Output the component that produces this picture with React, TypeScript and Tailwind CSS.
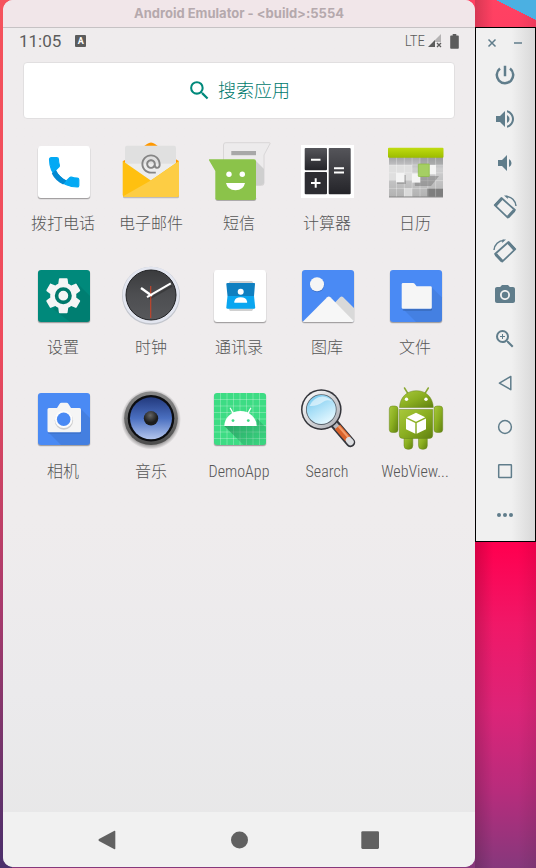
import type { ReactNode } from "react";
import {
  MdAlternateEmail,
  MdCameraAlt,
  MdSearch,
  MdSettings,
  MdVolumeDown,
  MdVolumeUp,
  MdZoomIn,
} from "react-icons/md";

/* ---------- launcher icons, all on a 72 x 72 grid ---------- */

function Icon({ children }: { children: ReactNode }) {
  return (
    <svg viewBox="0 0 72 72" className="size-18" aria-hidden="true">
      {children}
    </svg>
  );
}

function Tile({ fill, y = 10 }: { fill: string; y?: number }) {
  return (
    <>
      <rect x="10.500" y={y + 1} width="53" height="52.4" rx="3" fill="#000" opacity=".12" />
      <rect x="11" y={y + 0.8} width="52" height="52.2" rx="3" fill="#000" opacity=".22" />
      <rect x="11" y={y} width="52" height="52" rx="3" fill={fill} />
    </>
  );
}

function PhoneIcon() {
  return (
    <Icon>
      <Tile fill="#fff" />
      <path
        transform="translate(17.6 16.8) scale(1.63)"
        fill="#03a9f4"
        stroke="#03a9f4"
        strokeWidth=".7"
        d="M6.62 10.79c1.44 2.83 3.76 5.14 6.59 6.59l2.2-2.2c.27-.27.67-.36 1.02-.24 1.12.37 2.33.57 3.57.57.55 0 1 .45 1 1V20c0 .55-.45 1-1 1-9.39 0-17-7.61-17-17 0-.55.45-1 1-1h3.5c.55 0 1 .45 1 1 0 1.25.2 2.45.57 3.57.11.35.03.74-.25 1.02l-2.2 2.2z"
      />
      <path d="M24.800 37.500 28.900 33.900C31 38.200 34.800 42.300 39.400 44.500L36.200 48.600C31.200 46.200 27.200 42.200 24.800 37.500Z" fill="#0288d1" />
    </Icon>
  );
}

function MailIcon() {
  return (
    <Icon>
      <path d="M8 27v34q0 1.300 1.500 1.300h53q1.500 0 1.500-1.300V27z" fill="#000" opacity=".2" />
      <path d="M8 27 L8 25.500 Q8 24.500 10 24 L32 8 Q36 5 40 8 L62 24 Q64 24.500 64 25.500 L64 32 H8z" fill="#ff9800" />
      <path d="M12 9.700h47q2 0 2 2V45H10V11.700q0-2 2-2z" fill="#e0e0e0" />
      <path d="M10 27.700h51V46H10z" fill="#ededed" />
      <MdAlternateEmail x="24.500" y="16.500" size={23} color="#858585" />
      <path d="M7.700 25 35.800 44.600 64 25v34q0 2-2 2H9.700q-2 0-2-2z" fill="#ffc010" />
      <path d="M64 25v34q0 2-2 2H9.700q-1 0-1.500-.700L35.800 44.600z" fill="#fdcd44" />
    </Icon>
  );
}

function MessagesIcon() {
  return (
    <Icon>
      <path d="M22.500 6.700h44q1 .200.500 1L61 19v28q0 2.500-2.500 2.500h-38V9q0-2.300 2-2.300z" fill="#edebec" stroke="#d6d4d5" strokeWidth=".9" />
      <path d="M53 25 61 33v14q0 2-2.500 2H53z" fill="#cfcfcf" />
      <rect x="28.300" y="15" width="24.700" height="4.200" fill="#a8a8a8" />
      <path d="M12.300 62q0 3 2.500 3h36q2.500 0 2.500-3z" fill="#000" opacity=".28" />
      <path d="M6.500 23.300H51q2 0 2 2V62q0 2-2 2H14.500q-2.200 0-2.200-2V35L6 24.300q-.300-1 .500-1z" fill="#8bc34a" />
      <circle cx="26" cy="38.300" r="2.700" fill="#fff" />
      <circle cx="39.300" cy="38.300" r="2.700" fill="#fff" />
      <path d="M23 47h19q-1.500 7.300-9.500 7.300T23 47z" fill="#fff" />
    </Icon>
  );
}

function CalculatorIcon() {
  return (
    <Icon>
      <defs>
        <linearGradient id="calc-key" x1="0" y1="0" x2="0" y2="1">
          <stop offset="0" stopColor="#55555a" />
          <stop offset="1" stopColor="#242429" />
        </linearGradient>
      </defs>
      <rect x="10" y="9" width="53" height="53" fill="#fff" />
      <rect x="13.700" y="12" width="22.300" height="22.300" rx="1" fill="url(#calc-key)" />
      <rect x="13.700" y="36" width="22.300" height="22.200" rx="1" fill="#2d2d32" />
      <rect x="37.700" y="12" width="22" height="46.200" rx="1" fill="url(#calc-key)" />
      <path d="M20 23.700h9.500M20 47h9.500M24.700 42.200v9.600M43 32.300h10M43 36.600h10" stroke="#fff" strokeWidth="2" />
    </Icon>
  );
}

function CalendarIcon() {
  return (
    <Icon>
      <defs>
        <linearGradient id="cal-body" x1="0" y1="0" x2="0" y2="1">
          <stop offset="0" stopColor="#a3a4a6" />
          <stop offset=".3" stopColor="#cfcfd0" />
          <stop offset="1" stopColor="#b2b2b2" />
        </linearGradient>
        <linearGradient id="cal-head" x1="0" y1="0" x2="0" y2="1">
          <stop offset="0" stopColor="#c0dc10" />
          <stop offset="1" stopColor="#9cbc00" />
        </linearGradient>
      </defs>
      <rect x="10" y="21" width="54" height="40" fill="url(#cal-body)" />
      <rect x="10" y="29" width="23" height="15" fill="#dfdfdf" />
      <rect x="41" y="21" width="23" height="8" fill="#8f9092" opacity=".4" />
      <rect x="48" y="52.300" width="16" height="8.400" fill="#7e7e7e" />
      <rect x="25" y="52.300" width="8" height="8.400" fill="#dadada" />
      <path d="M17.500 21v40M25.300 21v40M33.100 21v40M41 21v40M48.800 21v40M56.600 21v40M10 29h54M10 36.800h54M10 44.600h54M10 52.400h54" stroke="#fff" strokeOpacity=".4" strokeWidth=".7" />
      <path d="M35 40h25l-8 10H36z" fill="#555" opacity=".35" />
      <rect x="18" y="39" width="9" height="9" fill="#555" opacity=".3" />
      <rect x="17" y="37" width="8.300" height="9.300" fill="#f4f4f4" />
      <rect x="33" y="37.300" width="8.300" height="9.300" fill="#f4f4f4" />
      <rect x="50" y="29" width="7" height="9.300" fill="#f4f4f4" />
      <rect x="39.300" y="28" width="11" height="12.500" rx=".5" fill="#a5cf63" stroke="#8aba40" strokeWidth=".7" />
      <rect x="9" y="11.700" width="55.500" height="10" rx="1" fill="url(#cal-head)" />
      <path d="M10 61h54" stroke="#777" strokeWidth=".8" />
    </Icon>
  );
}

function SettingsIcon() {
  return (
    <Icon>
      <Tile fill="#00897b" />
      <path d="M50 23 63 36V60q0 2-2 2H43L26 49z" fill="#000" opacity=".08" />
      <MdSettings x="14.500" y="14" size={43.500} color="#f5f5f5" />
      <circle cx="36.300" cy="35.700" r="10" fill="#f5f5f5" />
      <circle cx="36.300" cy="35.700" r="6.700" fill="#f5f5f5" stroke="#00796b" strokeWidth="3.600" />
    </Icon>
  );
}

function ClockIcon() {
  return (
    <Icon>
      <defs>
        <linearGradient id="clock-dial" x1="0" y1="0" x2="0" y2="1">
          <stop offset="0" stopColor="#3a3b3d" />
          <stop offset=".5" stopColor="#4d4e51" />
          <stop offset="1" stopColor="#57585b" />
        </linearGradient>
      </defs>
      <circle cx="36" cy="35.700" r="29" fill="#c3c6cd" />
      <circle cx="36" cy="35" r="28.300" fill="#e3e6f0" />
      <circle cx="36" cy="35" r="25" fill="url(#clock-dial)" stroke="#1f2022" strokeWidth="1" />
      <path d="M34 39 57 26" stroke="#222" strokeOpacity=".4" strokeWidth="2" />
      <path d="M26 28 36.500 35.500" stroke="#fff" strokeWidth="2.400" />
      <path d="M32 37.200 55.800 23.300" stroke="#fff" strokeWidth="2" />
      <path d="M35.700 26v32" stroke="#c0452c" strokeWidth="1.200" />
      <circle cx="36" cy="35" r="1.400" fill="#fff" />
    </Icon>
  );
}

function ContactsIcon() {
  return (
    <Icon>
      <Tile fill="#fff" />
      <path d="M27 21h22l2 3v24l-2 3H27l-2-3V24z" fill="#d0d0d0" />
      <path d="M23.300 24q0-1 1.200-1h26.600q1.200 0 .900 1l-1 12H24.500z" fill="#0f7fc0" />
      <path d="M24.500 36H51l1.200 11.500q0 1.300-1.200 1.300H24.500q-1.200 0-1.200-1.300z" fill="#0aa6f0" />
      <circle cx="37.700" cy="31.700" r="3" fill="#fff" />
      <path d="M31.300 42.700v-1.200q1-4.200 6.400-4.200t6.400 4.200v1.200z" fill="#fff" />
    </Icon>
  );
}

function GalleryIcon() {
  return (
    <Icon>
      <Tile fill="#4a8af4" />
      <circle cx="26.300" cy="25.300" r="7" fill="#000" opacity=".15" />
      <circle cx="26" cy="24.300" r="7" fill="#f5f5f5" />
      <path d="M36 51 49 37.200q1.600-1.600 3.200 0L63 48V61H40z" fill="#d9d9d9" />
      <path d="M12 61.500 36.200 37.200q1.600-1.600 3.200 0L62.900 61.200 61.500 62H12.500z" fill="#f7f7f7" />
    </Icon>
  );
}

function FilesIcon() {
  return (
    <Icon>
      <Tile fill="#4a8af4" />
      <path d="M52 26.500 63 37.500v22.500q0 2-2 2H37L23.500 48.500z" fill="#000" opacity=".07" />
      <path d="M23.500 49.500h28.500l1-1v1q0 1-1 1H24z" fill="#000" opacity=".25" />
      <path d="M24 23h10.200q.700 0 1.200.600l2.200 2.600h13.900q1.300 0 1.300 1.300v20q0 1.300-1.300 1.300H24q-1.300 0-1.300-1.300V24.300Q22.700 23 24 23z" fill="#f6f6f6" />
    </Icon>
  );
}

function CameraIcon() {
  return (
    <Icon>
      <Tile fill="#4a8af4" y={9} />
      <path d="M54 25 63 34V59q0 2-2 2H34L21 48z" fill="#000" opacity=".08" />
      <path d="M21 48.600h33v1H21z" fill="#000" opacity=".15" />
      <path d="M22 24h8l2.500-4q.800-1.300 2-1.300h5q1.200 0 2 1.300l2.500 4H52.500q1.500 0 1.500 1.500v21.300q0 1.500-1.500 1.500H22q-1.500 0-1.500-1.500V25.500Q20.500 24 22 24z" fill="#f5f5f5" />
      <circle cx="36.900" cy="36.500" r="9.200" fill="#000" opacity=".16" />
      <circle cx="36.700" cy="35.300" r="8.800" fill="#fcfcfc" />
      <circle cx="36.700" cy="35.300" r="6.800" fill="#4a8af4" />
    </Icon>
  );
}

function MusicIcon() {
  return (
    <Icon>
      <defs>
        <linearGradient id="speaker-cone" x1="0" y1="0" x2="0" y2="1">
          <stop offset="0" stopColor="#22397d" />
          <stop offset=".5" stopColor="#4a6fc0" />
          <stop offset="1" stopColor="#b4c6ee" />
        </linearGradient>
        <linearGradient id="speaker-rim" x1="0" y1="0" x2="0" y2="1">
          <stop offset="0" stopColor="#8a8a8a" />
          <stop offset="1" stopColor="#4c4c4c" />
        </linearGradient>
        <radialGradient id="speaker-shadow">
          <stop offset=".85" stopColor="#000" stopOpacity=".35" />
          <stop offset="1" stopColor="#000" stopOpacity="0" />
        </radialGradient>
        <radialGradient id="speaker-cap" cx=".45" cy=".3">
          <stop offset="0" stopColor="#666" />
          <stop offset="1" stopColor="#1c1c1c" />
        </radialGradient>
      </defs>
      <circle cx="36" cy="35.500" r="30" fill="url(#speaker-shadow)" />
      <circle cx="36" cy="34.300" r="26.800" fill="url(#speaker-rim)" />
      <circle cx="36" cy="34.300" r="23.300" fill="#0c0d10" />
      <circle cx="36" cy="34.300" r="21" fill="url(#speaker-cone)" />
      <circle cx="36" cy="34.300" r="7.200" fill="url(#speaker-cap)" />
    </Icon>
  );
}

function DemoIcon() {
  return (
    <Icon>
      <defs>
        <linearGradient id="robot-shadow" x1="0" y1="0" x2="1" y2=".8">
          <stop offset="0" stopColor="#1e8a55" stopOpacity=".8" />
          <stop offset="1" stopColor="#1e8a55" stopOpacity=".1" />
        </linearGradient>
      </defs>
      <Tile fill="#3ddc84" y={9} />
      <path d="M17.500 9v52M24 9v52M30.500 9v52M37 9v52M43.500 9v52M50 9v52M56.500 9v52M11 15.500h52M11 22h52M11 28.500h52M11 35h52M11 41.500h52M11 48h52M11 54.500h52" stroke="#fff" strokeOpacity=".38" strokeWidth=".7" />
      <path d="M21.300 42h32.400V34L63 43.500v15.500q0 2-2 2H40.500z" fill="url(#robot-shadow)" />
      <path d="M21.300 42a16.200 15 0 0 1 32.400 0z" fill="#fff" />
      <path d="M27.300 24.300 30.300 29.600M47.700 24.300 44.700 29.600" stroke="#fff" strokeWidth="1.300" strokeLinecap="round" />
      <circle cx="30" cy="36.600" r="1.400" fill="#3ddc84" />
      <circle cx="45.300" cy="36.600" r="1.400" fill="#3ddc84" />
    </Icon>
  );
}

function MagnifierIcon() {
  return (
    <Icon>
      <defs>
        <linearGradient id="lens" x1="0" y1="0" x2=".6" y2="1">
          <stop offset="0" stopColor="#6cc4ec" />
          <stop offset=".5" stopColor="#a9dff7" />
          <stop offset="1" stopColor="#e2f7ff" />
        </linearGradient>
        <linearGradient id="lens-ring" x1="0" y1="0" x2="1" y2="1">
          <stop offset="0" stopColor="#fff" />
          <stop offset="1" stopColor="#a9abb2" />
        </linearGradient>
      </defs>
      <path d="M42 38 59.500 58.500" stroke="#35363c" strokeWidth="9.500" strokeLinecap="round" />
      <path d="M41 37 47 44" stroke="#b6b8bd" strokeWidth="5" />
      <path d="M46.500 43 57 55" stroke="#d9622b" strokeWidth="7" />
      <path d="M47.500 42 57 53" stroke="#f39b68" strokeWidth="2" />
      <path d="M58 56.300 59.500 58" stroke="#dcdde0" strokeWidth="6.500" strokeLinecap="round" />
      <circle cx="30.300" cy="25.600" r="20.300" fill="#33343a" />
      <circle cx="30.300" cy="25.600" r="18.800" fill="url(#lens-ring)" />
      <circle cx="30.300" cy="25.600" r="15.300" fill="#55606a" />
      <circle cx="30.300" cy="25.600" r="14.500" fill="url(#lens)" />
      <path d="M18.500 22q4-9 13-9.500 6 .500 9.500 5-5-2.500-9 .500-6 4.500-13.500 4z" fill="#fff" opacity=".55" />
    </Icon>
  );
}

function RobotIcon() {
  return (
    <Icon>
      <defs>
        <linearGradient id="robot-body" x1="0" y1="0" x2="1" y2="1">
          <stop offset="0" stopColor="#a8c83c" />
          <stop offset=".5" stopColor="#8aae20" />
          <stop offset="1" stopColor="#5f8010" />
        </linearGradient>
      </defs>
      <path d="M25.500 4 29.500 10.500M49.300 4 45.300 10.500" stroke="#8aa832" strokeWidth="1.500" strokeLinecap="round" />
      <g fill="url(#robot-body)" stroke="#66851a" strokeWidth=".5">
        <rect x="25" y="50" width="8.800" height="15.300" rx="3.800" />
        <rect x="39.500" y="50" width="8.800" height="15.300" rx="3.800" />
        <rect x="10.300" y="22" width="8.700" height="26.500" rx="3" />
        <rect x="55" y="22" width="8.700" height="26.500" rx="3" />
        <path d="M20.500 23.500C21 13 28 6.700 37.400 6.700S53.800 13 54.300 23.500z" />
        <path d="M20.300 25.500h33.400V51q0 3.500-3.500 3.500H23.800q-3.500 0-3.500-3.500z" />
      </g>
      <circle cx="27.500" cy="15.300" r="1.700" fill="#fff" />
      <circle cx="47" cy="15.300" r="1.700" fill="#fff" />
      <path d="M37 28.700 46.300 33.200 37 37.700 27.700 33.200zM27 34.500 36.300 39v10.700L27 45.200zM47 34.500 37.700 39v10.700L47 45.200z" fill="#fff" />
    </Icon>
  );
}

const apps: { name: string; icon: ReactNode }[] = [
  { name: "拨打电话", icon: <PhoneIcon /> },
  { name: "电子邮件", icon: <MailIcon /> },
  { name: "短信", icon: <MessagesIcon /> },
  { name: "计算器", icon: <CalculatorIcon /> },
  { name: "日历", icon: <CalendarIcon /> },
  { name: "设置", icon: <SettingsIcon /> },
  { name: "时钟", icon: <ClockIcon /> },
  { name: "通讯录", icon: <ContactsIcon /> },
  { name: "图库", icon: <GalleryIcon /> },
  { name: "文件", icon: <FilesIcon /> },
  { name: "相机", icon: <CameraIcon /> },
  { name: "音乐", icon: <MusicIcon /> },
  { name: "DemoApp", icon: <DemoIcon /> },
  { name: "Search", icon: <MagnifierIcon /> },
  { name: "WebView...", icon: <RobotIcon /> },
];

/* ---------- emulator controls ---------- */

function RotateIcon({ flipped = false }: { flipped?: boolean }) {
  return (
    <svg viewBox="0 0 24 24" className={flipped ? "size-6 -scale-x-100" : "size-6"} fill="none" stroke="currentColor" aria-hidden="true">
      <path d="M8.500 3 22 15 14.800 22.700 1.700 10.200z" strokeWidth="1.700" strokeLinejoin="round" />
      <path d="M8.800 3.600 2.500 10.400M21.200 15.400 15 22" strokeWidth="3" />
      <path d="M13 1.600C18.500 1.600 22.500 5.500 23 11" strokeWidth="1.500" />
      <path d="M11 .5 14.500.5 15 4z" fill="currentColor" stroke="none" />
    </svg>
  );
}

function Shape({ children }: { children: ReactNode }) {
  return (
    <svg viewBox="0 0 24 24" className="size-6" fill="none" stroke="currentColor" strokeWidth="1.500" strokeLinejoin="round" aria-hidden="true">
      {children}
    </svg>
  );
}

const controls: { label: string; icon: ReactNode }[] = [
  { label: "Power", icon: <Shape><path d="M12 2.800v10.400M7 5.500a8.200 8.200 0 1 0 10 0" strokeWidth="2.500" /></Shape> },
  { label: "Volume up", icon: <MdVolumeUp size={24} /> },
  { label: "Volume down", icon: <MdVolumeDown size={24} /> },
  { label: "Rotate left", icon: <RotateIcon /> },
  { label: "Rotate right", icon: <RotateIcon flipped /> },
  { label: "Take screenshot", icon: <MdCameraAlt size={24} /> },
  { label: "Zoom", icon: <MdZoomIn size={24} /> },
  { label: "Back", icon: <Shape><path d="M17.800 5.500v13.200L6.400 12.100z" /></Shape> },
  { label: "Home", icon: <Shape><circle cx="12" cy="12" r="6.400" /></Shape> },
  { label: "Overview", icon: <Shape><rect x="5.700" y="5.700" width="12.700" height="12.700" rx=".5" /></Shape> },
  {
    label: "More",
    icon: (
      <Shape>
        <g fill="currentColor" stroke="none">
          <circle cx="6" cy="12" r="2" />
          <circle cx="12" cy="12" r="2" />
          <circle cx="18" cy="12" r="2" />
        </g>
      </Shape>
    ),
  },
];

function ControlPanel() {
  return (
    <aside className="mt-[27px] flex w-[61px] shrink-0 flex-col items-center border border-black bg-linear-to-r from-[#f0f0f0] from-60% to-[#d8d8d8] pt-1 pr-px pb-1 text-[#607d8b]">
      <div className="flex h-[21px] items-center gap-3">
        <button type="button" aria-label="Close" className="flex size-[14px] items-center justify-center">
          <svg viewBox="0 0 14 14" className="size-[14px]" stroke="currentColor" strokeWidth="1.500">
            <path d="M3.500 3.500 10.500 10.500M10.500 3.500 3.500 10.500" />
          </svg>
        </button>
        <button type="button" aria-label="Minimize" className="flex size-[14px] items-center justify-center">
          <svg viewBox="0 0 14 14" className="size-[14px]" stroke="currentColor" strokeWidth="1.500">
            <path d="M3 7h8" />
          </svg>
        </button>
      </div>
      {controls.map((control) => (
        <button key={control.label} type="button" aria-label={control.label} className="flex h-11 w-full items-center justify-center">
          {control.icon}
        </button>
      ))}
    </aside>
  );
}

/* ---------- phone screen ---------- */

function StatusBar() {
  return (
    <div className="flex h-[26px] items-center justify-between pr-4 pl-4 text-[#5c5c5c]">
      <div className="flex items-center gap-[14px]">
        <span className="text-[17px] leading-6">11:05</span>
        <span className="flex h-3 w-[11px] items-center justify-center rounded-[1px] bg-[#5c5c5c] text-[9px] leading-3 font-bold text-white">A</span>
      </div>
      <div className="flex items-center">
        <span className="mr-[3px] font-['Roboto_Condensed','Roboto',sans-serif] text-[15px] leading-6 font-light">LTE</span>
        <svg viewBox="0 0 14 14" className="mr-2 size-[14px]" aria-hidden="true">
          <path d="M13 0v8H5z" fill="#b5b3b4" />
          <path d="M0 13 7 6v7z" fill="#5c5c5c" />
          <path d="M9 9l4 4M13 9l-4 4" stroke="#5c5c5c" strokeWidth="1.300" />
        </svg>
        <svg viewBox="0 0 9 15" className="h-[15px] w-[9px]" fill="#5c5c5c" aria-hidden="true">
          <path d="M2.700 0h3.600v1.500H8q.8 0 .8.800V14q0 .8-.8.800H1q-.8 0-.8-.8V2.300q0-.8.800-.8h1.700z" />
        </svg>
      </div>
    </div>
  );
}

function NavBar() {
  return (
    <nav className="flex h-[55px] shrink-0 items-center justify-center gap-[76px] bg-[#f1f1f1] text-[#616161]">
      <button type="button" aria-label="Back" className="flex h-10 w-14 items-center justify-center">
        <svg viewBox="0 0 20 20" className="size-5" fill="currentColor"><path d="M17.500.8q.8-.3.800.7v17q0 1-.8.700L2 11q-1.200-1 0-2z" /></svg>
      </button>
      <button type="button" aria-label="Home" className="flex h-10 w-14 items-center justify-center">
        <svg viewBox="0 0 20 20" className="size-5" fill="currentColor"><circle cx="10.500" cy="10" r="8.500" /></svg>
      </button>
      <button type="button" aria-label="Overview" className="flex h-10 w-14 items-center justify-center">
        <svg viewBox="0 0 20 20" className="size-5" fill="currentColor"><rect x="0.300" y="1.200" width="17.700" height="17.700" rx="1.300" /></svg>
      </button>
    </nav>
  );
}

export default function App() {
  return (
    <div className="flex min-h-screen items-start pb-px pl-[3px] font-['Roboto','Noto_Sans_CJK_SC',sans-serif] [background:linear-gradient(#f5525c,#ee4a5c_40%,#a83a6c_70%,#4a2f6b)_left/12px_100%_no-repeat,linear-gradient(27deg,transparent_50%,#4bb0e2_50%)_right_top/40px_20px_no-repeat,linear-gradient(90deg,transparent_70%,#00000014)_right/61px_100%_no-repeat,linear-gradient(90deg,#00000028,transparent_30%)_right/61px_100%_no-repeat,linear-gradient(#ff4262,#ff3f63_4%,#ff0050_63%,#f01868_72%,#dc2478_82%,#b82c7c_91%,#86387c)]">
      <div className="flex min-w-0 flex-1 flex-col self-stretch overflow-hidden rounded-[10px] bg-linear-to-b from-[#efeced] from-60% via-[#ebeaec] via-80% to-[#e7e7e7]">
        <header className="flex h-7 shrink-0 items-center justify-center border-b border-[#c6c2c4] bg-[#f1e6e9] pb-px">
          <h1 className="font-['Inter',sans-serif] text-[13px] leading-4 font-bold text-[#b5a9ad]">Android Emulator - &lt;build&gt;:5554</h1>
        </header>
        <StatusBar />
        <main className="flex-1">
          <label className="mx-5 mt-2 flex h-[57px] items-center justify-center gap-[6px] rounded-[4px] border border-[#e1dfe0] bg-white text-[#00897b]">
            <MdSearch size={25} aria-hidden="true" />
            <input
              type="text"
              aria-label="搜索应用"
              placeholder="搜索应用"
              className="w-[73px] bg-transparent text-lg leading-6 font-light outline-none placeholder:text-[#007a6d] placeholder:opacity-100"
            />
          </label>
          <div className="grid grid-cols-5 px-4 pt-[17px]">
            {apps.map((app) => (
              <button key={app.name} type="button" className="flex flex-col items-center gap-1 pb-6">
                {app.icon}
                <span className="font-['Roboto_Condensed','Roboto','Noto_Sans_CJK_SC',sans-serif] text-base leading-6 font-light text-[#555555]">{app.name}</span>
              </button>
            ))}
          </div>
        </main>
        <NavBar />
      </div>
      <ControlPanel />
    </div>
  );
}
